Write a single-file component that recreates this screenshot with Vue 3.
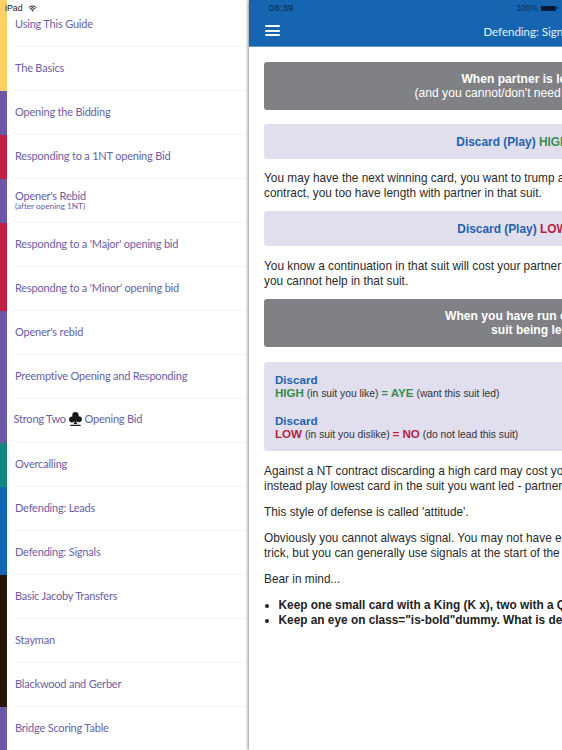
<script setup>
const rows = [
  { t: 'Using This Guide', c: 'yellow' },
  { t: 'The Basics', c: 'yellow' },
  { t: 'Opening the Bidding', c: 'purple' },
  { t: 'Responding to a 1NT opening Bid', c: 'crimson' },
  { t: "Opener's Rebid", s: '(after opening 1NT)', c: 'purple' },
  { t: "Respondng to a 'Major' opening bid", c: 'crimson' },
  { t: "Respondng to a 'Minor' opening bid", c: 'crimson' },
  { t: "Opener's rebid", c: 'purple' },
  { t: 'Preemptive Opening and Responding', c: 'purple' },
  { t: 'Strong Two', after: 'Opening Bid', club: true, c: 'purple' },
  { t: 'Overcalling', c: 'teal' },
  { t: 'Defending: Leads', c: 'blue' },
  { t: 'Defending: Signals', c: 'blue' },
  { t: 'Basic Jacoby Transfers', c: 'brown' },
  { t: 'Stayman', c: 'brown' },
  { t: 'Blackwood and Gerber', c: 'brown' },
  { t: 'Bridge Scoring Table', c: 'purple' }
]
</script>

<template>
  <div class="page">
    <aside class="side">
      <div v-for="r in rows" :key="r.t" class="row">
        <div class="bar" :class="r.c"></div>
        <div class="label" :class="{ shifted: r.club }">
          <div class="title">
            {{ r.t }}
            <template v-if="r.club">
              <svg class="club" viewBox="0 0 24 26" aria-hidden="true">
                <path d="M12 0c3.6 0 6 2.400 6 5.400 0 .9-.2 1.700-.6 2.500 3.600-.4 6.600 1.900 6.600 5.500 0 3.300-2.600 5.600-5.600 5.600-2.200 0-4-.9-5.100-2.600.2 2.500 1.100 4.300 2.700 6.100H8c1.600-1.800 2.500-3.600 2.700-6.100C9.600 18.500 7.800 19.400 5.600 19.400 2.600 19.400 0 17.100 0 13.800c0-3.600 3-5.900 6.600-5.500-.4-.8-.6-1.600-.6-2.500C6 2.400 8.400 0 12 0z" fill="#17171c"/>
                <rect x="2" y="23.500" width="20" height="2.500" rx="1.200" fill="#17171c"/>
              </svg>
              {{ r.after }}
            </template>
          </div>
          <div v-if="r.s" class="sub">{{ r.s }}</div>
        </div>
      </div>
    </aside>

    <main class="panel">
      <header class="head">
        <div class="status">
          <span class="clock">08:39</span>
          <span class="status-right">
            <svg class="bt" viewBox="0 0 8 12" aria-hidden="true"><path d="M1 3l5 5.500L4 10.500v-9l2 2L1 9" fill="none" stroke="#3d5f86" stroke-width="1"/></svg>
            <span class="pct">100%</span>
            <span class="battery"></span>
          </span>
        </div>
        <div class="navbar">
          <div class="burger"><i></i><i></i><i></i></div>
          <div class="nav-title">Defending: Signals</div>
        </div>
      </header>

      <section class="content">
        <div class="box gray first">
          <strong>When partner is leading</strong><br>
          (and you cannot/don't need to win the trick)
        </div>
        <div class="box lav">
          <span class="blue-t">Discard (Play)</span> <span class="green-t">HIGH cards</span>
        </div>
        <p>You may have the next winning card, you want to trump a later round, or in a<br>contract, you too have length with partner in that suit.</p>
        <div class="box lav">
          <span class="blue-t">Discard (Play)</span> <span class="red-t">LOW cards</span>
        </div>
        <p>You know a continuation in that suit will cost your partner a trick, or<br>you cannot help in that suit.</p>
        <div class="box gray second">
          <strong>When you have run out of the<br>suit being led</strong>
        </div>
        <div class="box lav big">
          <div class="pair">
            <div class="blue-t">Discard</div>
            <div><span class="green-t">HIGH</span> (in suit you like) <span class="green-t">= AYE</span> (want this suit led)</div>
          </div>
          <div class="pair">
            <div class="blue-t">Discard</div>
            <div><span class="red-t">LOW</span> (in suit you dislike) <span class="red-t">= NO</span> (do not lead this suit)</div>
          </div>
        </div>
        <p class="wide">Against a NT contract discarding a high card may cost you a trick, so you may<br>instead play lowest card in the suit you want led - partner will read it.</p>
        <p class="wide">This style of defense is called 'attitude'.</p>
        <p class="wide">Obviously you cannot always signal. You may not have enough cards to spare a<br>trick, but you can generally use signals at the start of the hand.</p>
        <p class="wide">Bear in mind...</p>
        <ul>
          <li>Keep one small card with a King (K x), two with a Queen (Q x x)</li>
          <li>Keep an eye on class="is-bold"dummy. What is declarer planning?</li>
        </ul>
      </section>
    </main>

    <div class="ipad">
      <span>iPad</span>
      <svg class="wifi" viewBox="0 0 14 10" aria-hidden="true">
        <path d="M1 3.600a8.500 8.500 0 0 1 12 0M3 5.600a5.600 5.600 0 0 1 8 0M5 7.500a2.800 2.800 0 0 1 4 0" fill="none" stroke="#111" stroke-width="1.500"/>
        <path d="M7 10L5.700 8.500a1.800 1.800 0 0 1 2.600 0z" fill="#111"/>
      </svg>
    </div>
  </div>
</template>

<style>
html, body { margin: 0; padding: 0; background: #fff; }
</style>

<style scoped>
.page {
  position: relative;
  display: flex;
  width: 562px;
  height: 750px;
  overflow: hidden;
  background: #fff;
}
.side {
  flex: 0 0 249px;
  padding-top: 3px;
  box-sizing: border-box;
  font-family: "Lato", "Open Sans", sans-serif;
}
.row {
  display: flex;
  height: 44px;
}
.row:first-child { margin-top: -3px; height: 47px; }
.bar { flex: 0 0 7px; }
.yellow { background: #fdd068; }
.purple { background: #6b56a8; }
.crimson { background: #bf2044; }
.teal { background: #12867f; }
.blue { background: #1266b3; }
.brown { background: #2a1408; }
.label {
  flex: 1;
  margin-left: 8px;
  padding-bottom: .5px;
  border-bottom: 1px solid #f5f5f6;
  display: flex;
  flex-direction: column;
  justify-content: center;
  color: #6b60a6;
  box-sizing: border-box;
}
.row:first-child .label { padding-top: 3px; }
.shifted { margin-left: 6.500px; padding-bottom: 3px; }
.title { font-size: 11px; letter-spacing: -.2px; line-height: 12.500px; white-space: nowrap; }
.sub { font-size: 8.300px; line-height: 8.500px; letter-spacing: -.05px; }
.club { width: 13px; height: 14px; vertical-align: -3px; margin: 0 .2px; }

.panel {
  flex: 0 0 562px;
  box-shadow: -1px 0 3px rgba(0, 0, 0, .45);
  background: #fff;
  font-family: "Liberation Sans", Arial, sans-serif;
  color: #2b2b2b;
  position: relative;
}
.head {
  height: 47px;
  background: #1565b0;
  border-bottom: 1px solid #5e97cf;
  box-sizing: border-box;
}
.status {
  height: 15px;
  display: flex;
  align-items: center;
  justify-content: space-between;
  padding: 1px 0 0 20px;
  font-size: 8.500px;
  box-sizing: border-box;
  width: 313px;
}
.clock { letter-spacing: .4px; font-size: 9px; color: #0b2444; }
.status-right { display: flex; align-items: center; gap: 3px; }
.pct { color: #0f2f58; }
.bt { width: 5px; height: 8px; margin-right: 3px; }
.battery {
  position: relative;
  width: 15px;
  height: 5px;
  background: #071a33;
  margin-right: 6px;
}
.battery::after {
  content: "";
  position: absolute;
  right: -2px;
  top: 1.500px;
  width: 1px;
  height: 2px;
  background: #071a33;
}
.navbar { position: relative; height: 31px; display: flex; align-items: center; justify-content: center; }
.burger {
  position: absolute;
  left: 16px;
  top: 10px;
  display: flex;
  flex-direction: column;
  gap: 2.500px;
}
.burger i { display: block; width: 15px; height: 2px; background: #fff; border-radius: 1px; }
.nav-title { font-family: "Lato", "Open Sans", sans-serif; font-size: 11.500px; color: #e8f0f8; margin-top: 1px; }

.content { padding: 15px; }
.box {
  border-radius: 3px;
  text-align: center;
  font-size: 12.100px;
  line-height: 14px;
  margin-bottom: 12.800px;
}
.gray {
  background: #808184;
  color: #fff;
  padding: 10px;
  height: 48px;
  box-sizing: border-box;
}
.first { margin-bottom: 13.500px; }
.second { margin-bottom: 15px; }
.lav {
  background: #e1deee;
  height: 35px;
  line-height: 36px;
  font-size: 11.900px;
  font-weight: 700;
}
.big {
  height: 89px;
  padding: 10.500px 11px;
  box-sizing: border-box;
  text-align: left;
  line-height: 13.300px;
  font-weight: 400;
  font-size: 10.300px;
  color: #333;
}
.pair + .pair { margin-top: 13.400px; }
.pair .blue-t, .pair .green-t, .pair .red-t { font-size: 11.600px; }
.blue-t { color: #1f63ae; font-weight: 700; }
.green-t { color: #3a8d4c; font-weight: 700; }
.red-t { color: #b81f45; font-weight: 700; }
p {
  margin: 0 0 11px;
  font-size: 11.850px;
  line-height: 14.600px;
  white-space: nowrap;
}
p.wide { margin-bottom: 11.600px; }
ul {
  margin: 0;
  padding-left: 14.500px;
  font-size: 11.850px;
  line-height: 14.600px;
  font-weight: 700;
  color: #222;
  white-space: nowrap;
}

.ipad {
  position: absolute;
  left: 5px;
  top: 3px;
  display: flex;
  align-items: center;
  gap: 5px;
  font-family: "Liberation Sans", Arial, sans-serif;
  font-size: 8.800px;
  line-height: 11px;
  color: #222;
}
.wifi { width: 9px; height: 7px; }
</style>
